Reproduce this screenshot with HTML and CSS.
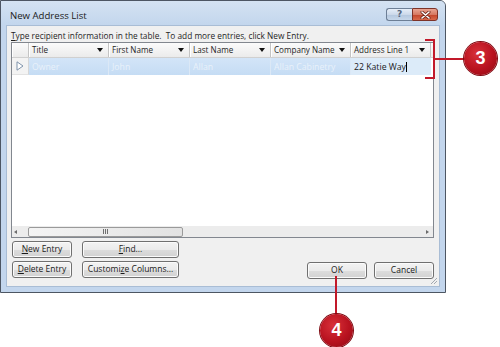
FILE: index.html
```html
<!DOCTYPE html>
<html lang="en">

<head>
    <meta charset="UTF-8">
    <meta name="viewport" content="width=device-width, initial-scale=1.0">
    <title>New Address List</title>
    <link rel="stylesheet" href="styles.css">
</head>

<body>
    <div class="stage">
        <div class="window">
            <div class="titlebar">
                <span class="title">New Address List</span>
                <div class="caption">
                    <span class="cap help">?</span>
                    <span class="cap close">
                        <svg width="11" height="8" viewBox="0 0 11 8">
                            <path d="M2 1 L9 7 M9 1 L2 7" stroke="#6b2418" stroke-width="3" stroke-linecap="round" />
                            <path d="M2 1 L9 7 M9 1 L2 7" stroke="#ffffff" stroke-width="1.6" stroke-linecap="round" />
                        </svg>
                    </span>
                </div>
            </div>

            <div class="client">
                <p class="hint"><u>T</u>ype recipient information in the table.&nbsp; To add more entries, click New Entry.</p>

                <div class="grid">
                    <div class="row head">
                        <div class="sel"></div>
                        <div class="cell">Title<i class="arrow"></i></div>
                        <div class="cell">First Name<i class="arrow"></i></div>
                        <div class="cell">Last Name<i class="arrow"></i></div>
                        <div class="cell">Company Name<i class="arrow"></i></div>
                        <div class="cell">Address Line 1<i class="arrow"></i></div>
                    </div>
                    <div class="row data">
                        <div class="sel">
                            <svg width="8" height="10" viewBox="0 0 8 10">
                                <path d="M1 0.8 L7 5 L1 9.2 Z" fill="#ffffff" stroke="#7f93ab" stroke-width="1" />
                            </svg>
                        </div>
                        <div class="cell dim">Owner</div>
                        <div class="cell dim">John</div>
                        <div class="cell dim">Allan</div>
                        <div class="cell dim">Allan Cabinetry</div>
                        <div class="cell edit">22 Katie Way<span class="caret"></span></div>
                    </div>
                    <div class="empty"></div>
                    <div class="hscroll">
                        <span class="sarrow left"></span>
                        <div class="thumb"><span class="grip-lines"></span></div>
                        <span class="sarrow right"></span>
                    </div>
                </div>

                <div class="actions">
                    <div class="left-buttons">
                        <button class="btn small"><u>N</u>ew Entry</button>
                        <button class="btn wide"><u>F</u>ind...</button>
                        <button class="btn small"><u>D</u>elete Entry</button>
                        <button class="btn wide">Customi<u>z</u>e Columns...</button>
                    </div>
                    <div class="right-buttons">
                        <button class="btn">OK</button>
                        <button class="btn">Cancel</button>
                    </div>
                </div>

                <svg class="size-grip" width="8" height="8" viewBox="0 0 8 8">
                    <path d="M7 1 L1 7 M7 4 L4 7" stroke="#a3a9b1" stroke-width="1" />
                </svg>
            </div>
        </div>

        <!-- callout 3: bracket on the new entry -->
        <div class="bracket"></div>
        <div class="lead lead-3"></div>
        <div class="badge badge-3">3</div>

        <!-- callout 4: OK button -->
        <div class="lead lead-4"></div>
        <div class="badge badge-4">4</div>
    </div>
</body>

</html>
```

FILE: styles.css
```css
* {
    box-sizing: border-box;
}

body {
    margin: 0;
    background: #ffffff;
    font-family: "Open Sans", "Noto Sans", sans-serif;
    font-size: 8.5px;
    color: #1e1e1e;
}

.stage {
    position: relative;
    width: 500px;
    height: 347px;
    overflow: hidden;
}

/* dialog frame */

.window {
    width: 446px;
    height: 293px;
    border: 1px solid #4d5663;
    border-radius: 0 6px 0 0;
    background: #c3d6ed;
    padding: 0 5px 5px 5px;
    display: flex;
    flex-direction: column;
}

.titlebar {
    height: 24px;
    flex: none;
    display: flex;
    align-items: flex-start;
    justify-content: space-between;
    background: linear-gradient(#d4e2f2, #c3d6ed);
    margin: 0 -5px;
    padding: 0 7px 0 9px;
    border-radius: 0 5px 0 0;
}

.title {
    font-size: 9.6px;
    line-height: 12px;
    margin-top: 9px;
    color: #1a1a1a;
}

.caption {
    display: flex;
    margin-top: 7px;
}

.cap {
    width: 26px;
    height: 13px;
    display: flex;
    align-items: center;
    justify-content: center;
    border: 1px solid #6d7f96;
}

.help {
    border-radius: 3px 0 0 3px;
    border-right: none;
    background: linear-gradient(#e6eef8 0%, #ccd9ea 50%, #b4c7de 51%, #c7d7ea 100%);
    color: #55677e;
    font-family: "DejaVu Sans", sans-serif;
    font-size: 9px;
    font-weight: bold;
    line-height: 1;
}

.close {
    border-radius: 0 3px 3px 0;
    border-color: #7d3328;
    background: linear-gradient(#e9a492 0%, #d77a63 50%, #c2442a 51%, #d9694b 100%);
}

.client {
    flex: 1;
    position: relative;
    background: #f0f0f0;
    border: 1px solid #a9bdd5;
    padding: 3px 5px 8px 4px;
    display: flex;
    flex-direction: column;
}

.hint {
    margin: 0;
    height: 13px;
    line-height: 13px;
    white-space: nowrap;
    font-size: 8.3px;
}

.hint u,
.btn u {
    text-decoration-thickness: 1px;
    text-underline-offset: 1px;
}

/* table */

.grid {
    flex: 1;
    width: 423px;
    border: 1px solid #82878f;
    background: #ffffff;
    display: flex;
    flex-direction: column;
}

.row {
    display: grid;
    grid-template-columns: 17px 80px 81px 81px 80px 80px;
}

.head {
    height: 15px;
    background: linear-gradient(#fbfbfb, #ebebeb);
    border-bottom: 1px solid #d0d0d0;
}

.head .sel,
.head .cell {
    border-right: 1px solid #c4c4c4;
    box-shadow: inset 1px 0 0 #ffffff;
}

.cell {
    display: flex;
    align-items: center;
    padding-left: 3px;
    white-space: nowrap;
    line-height: 14px;
}

.head .cell {
    justify-content: space-between;
    padding-right: 5px;
    font-size: 8.1px;
}

.arrow {
    width: 0;
    height: 0;
    border-left: 3.5px solid transparent;
    border-right: 3.5px solid transparent;
    border-top: 4px solid #111111;
}

.data {
    height: 17px;
}

.data .sel {
    display: flex;
    align-items: center;
    justify-content: center;
    background: #f3f3f3;
    border-right: 1px solid #d6d6d6;
    border-bottom: 1px solid #e2e2e2;
}

.data .cell {
    background: linear-gradient(#d3e5f8, #c5dcf4);
    border-right: 1px solid #dbe8f6;
    font-size: 8.7px;
}

.dim {
    color: #e9f1fa;
}

.data .edit {
    background: #dcebf9;
    color: #1a1a1a;
    border-right: none;
}

.caret {
    width: 1px;
    height: 10px;
    background: #000000;
    margin-left: 0.5px;
}

.empty {
    flex: 1;
}

.hscroll {
    height: 11px;
    background: #ececec;
    display: flex;
    align-items: center;
    padding: 0 4px 0 2px;
}

.sarrow {
    width: 0;
    height: 0;
    border-top: 2.5px solid transparent;
    border-bottom: 2.5px solid transparent;
}

.sarrow.left {
    border-right: 3px solid #6b6b6b;
}

.sarrow.right {
    border-left: 3px solid #6b6b6b;
    margin-left: auto;
}

.thumb {
    width: 155px;
    height: 10px;
    margin-left: 11px;
    border: 1px solid #9a9a9a;
    border-radius: 2px;
    background: linear-gradient(90deg, #f4f4f4, #e2e2e2);
    display: flex;
    align-items: center;
    justify-content: center;
}

.grip-lines {
    width: 5px;
    height: 5px;
    background: repeating-linear-gradient(90deg, #6f6f6f 0 1px, transparent 1px 2px);
}

/* buttons */

.actions {
    display: flex;
    justify-content: space-between;
    align-items: flex-end;
    margin-top: 3px;
}

.left-buttons {
    display: grid;
    grid-template-columns: 60px 97px;
    column-gap: 10px;
    row-gap: 3px;
    margin-left: 1px;
}

.right-buttons {
    display: flex;
    gap: 7px;
    margin-bottom: -1px;
}

.btn {
    height: 17px;
    width: 60px;
    padding: 0;
    border: 1px solid #707070;
    border-radius: 3px;
    background: linear-gradient(#f3f3f3 0%, #ebebeb 50%, #dddddd 51%, #d2d2d2 100%);
    box-shadow: inset 0 0 0 1px #fbfbfb;
    font-family: "Open Sans", "Noto Sans", sans-serif;
    font-size: 8.5px;
    color: #1a1a1a;
    line-height: 1;
}

.btn.wide {
    width: 97px;
}

.size-grip {
    position: absolute;
    right: 1px;
    bottom: 1px;
}

/* callouts */

.bracket {
    position: absolute;
    left: 425px;
    top: 39px;
    width: 10px;
    height: 40px;
    border: 2px solid #c2192a;
    border-left: none;
}

.lead {
    position: absolute;
    background: #c2192a;
}

.lead-3 {
    left: 435px;
    top: 58px;
    width: 32px;
    height: 2px;
}

.lead-4 {
    left: 335px;
    top: 276px;
    width: 2px;
    height: 42px;
}

.badge {
    position: absolute;
    width: 33px;
    height: 33px;
    border-radius: 50%;
    background: radial-gradient(circle at 40% 35%, #d8313a 0%, #b8121f 55%, #8c0b14 100%);
    box-shadow: 0 0 0 1px #7e0a12;
    color: #ffffff;
    font-family: "Liberation Sans", sans-serif;
    font-weight: bold;
    font-size: 18px;
    display: flex;
    align-items: center;
    justify-content: center;
}

.badge-3 {
    left: 464px;
    top: 42px;
}

.badge-4 {
    left: 320px;
    top: 314px;
}
```
